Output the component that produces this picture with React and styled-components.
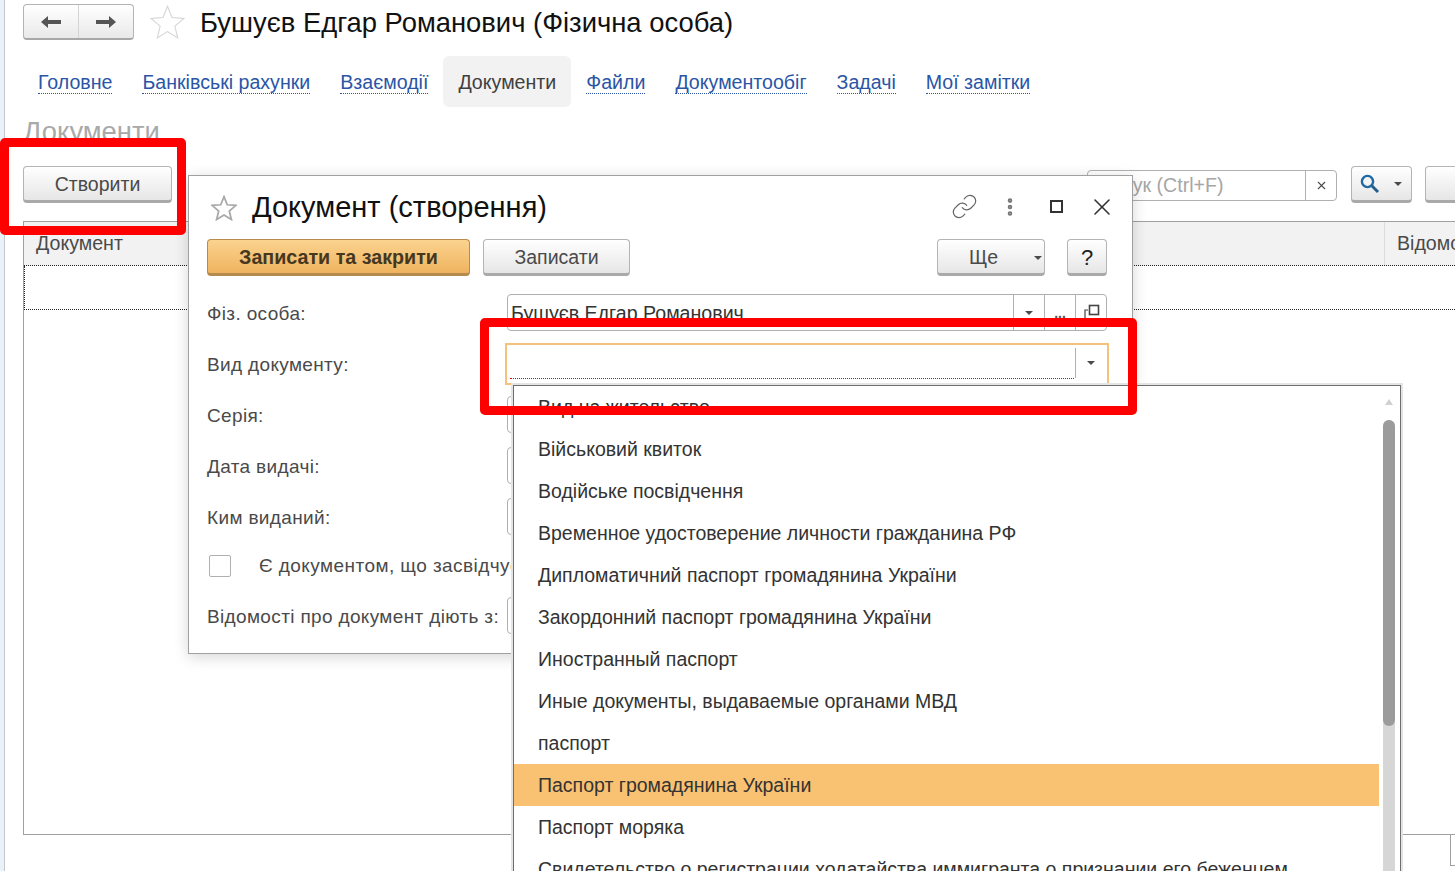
import React from 'react';
import styled, { createGlobalStyle } from 'styled-components';
import { Link, EllipsisVertical, X } from 'lucide-react';

const GlobalStyle = createGlobalStyle`
  html, body {
    margin: 0;
    padding: 0;
    background: #fff;
    overflow: hidden;
  }
  * {
    box-sizing: border-box;
  }
  body {
    font-family: "Liberation Sans", Arial, sans-serif;
  }
`;

const Page = styled.div`
  position: relative;
  display: flex;
  width: 1455px;
  height: 871px;
  overflow: hidden;
  background: #fff;
`;

const SideStrip = styled.div`
  flex: none;
  width: 5px;
  background: #eaf1f8;
  border-right: 1px solid #c4c9ce;
`;

const Content = styled.div`
  flex: none;
  width: 1600px;
  padding: 4px 0 0 18px;
`;

const TopBar = styled.div`
  display: flex;
  align-items: center;
  height: 36px;
`;

const NavGroup = styled.div`
  display: flex;
  width: 111px;
  height: 36px;
  border: 1px solid #b4b4b4;
  border-bottom: 2px solid #a8a8a8;
  border-radius: 4px;
  background: linear-gradient(#ffffff, #e9e9e9);
`;

const NavButton = styled.div`
  flex: 1;
  display: flex;
  align-items: center;
  justify-content: center;
  & + & {
    border-left: 1px solid #d4d4d4;
  }
`;

const ArrowIcon = styled.svg`
  width: 22px;
  height: 14px;
  transform: ${(p) => (p.$flip ? 'scaleX(-1)' : 'none')};
`;

const TitleStar = styled.svg`
  flex: none;
  margin-left: 15px;
  width: 37px;
  height: 36px;
`;

const PageTitle = styled.h1`
  margin: 2px 0 0 14px;
  font-size: 27.4px;
  font-weight: 400;
  color: #111;
  white-space: nowrap;
`;

const Tabs = styled.div`
  display: flex;
  margin-top: 16px;
  height: 51px;
`;

const Tab = styled.div`
  display: flex;
  align-items: center;
  padding: 2px 15px 0;
  font-size: 19.6px;
  border-radius: 6px;
  color: #404040;
  background: ${(p) => (p.$active ? '#f2f2f2' : 'transparent')};
`;

const TabLink = styled.span`
  color: #2a55a6;
  border-bottom: 1px dotted #2a55a6;
  line-height: 22px;
`;

const SectionTitle = styled.div`
  margin-top: 9px;
  height: 31px;
  line-height: 31px;
  font-size: 27.4px;
  color: #a9a9a9;
`;

const Toolbar = styled.div`
  display: flex;
  align-items: center;
  margin-top: 19px;
  height: 37px;
`;

const Button = styled.div`
  flex: none;
  display: flex;
  align-items: center;
  justify-content: center;
  gap: ${(p) => p.$gap || 0}px;
  width: ${(p) => p.$width}px;
  height: 37px;
  padding-top: 2px;
  font-size: ${(p) => (p.$primary ? 19.7 : 19.5)}px;
  font-weight: ${(p) => (p.$primary ? 700 : 400)};
  color: ${(p) => (p.$primary ? '#46371f' : '#4a4a4a')};
  border: 1px solid ${(p) => (p.$primary ? '#b98c4a' : '#b4b4b4')};
  border-bottom: 3px solid ${(p) => (p.$primary ? '#b58a4e' : '#a9a9a9')};
  border-radius: 4px;
  background: ${(p) => (p.$primary
    ? 'linear-gradient(#fbd38f, #efb35f)'
    : 'linear-gradient(#ffffff, #e6e6e6)')};
`;

const SearchButton = styled(Button)`
  margin-left: 14px;
  padding: 0 2px 0 0;
`;

const NextButton = styled(Button)`
  margin-left: 13px;
`;

const MoreButton = styled(Button)`
  justify-content: flex-start;
  padding-left: 31px;
`;

const HelpButton = styled(Button)`
  margin-left: 9px;
  font-size: 22px;
  color: #222;
`;

const Caret = styled.span`
  flex: none;
  width: 0;
  height: 0;
  border-left: 4px solid transparent;
  border-right: 4px solid transparent;
  border-top: 4px solid #4a4a4a;
`;

const SearchBox = styled.div`
  flex: none;
  display: flex;
  margin: 1px 0 0 915px;
  width: 250px;
  height: 31px;
  border: 1px solid #b0b0b0;
  border-radius: 4px;
`;

const SearchInput = styled.div`
  flex: 1;
  padding-left: 4px;
  line-height: 29px;
  font-size: 19.6px;
  color: #a6a6a6;
`;

const SearchClear = styled.div`
  flex: none;
  display: flex;
  align-items: center;
  justify-content: center;
  width: 31px;
  border-left: 1px solid #b0b0b0;
  color: #4a4a4a;
`;

const SearchIcon = styled.svg`
  width: 20px;
  height: 20px;
`;

const Table = styled.div`
  margin-top: 18px;
  height: 614px;
  border: 1px solid #a0a0a0;
  border-width: 1px 0 1px 1px;
`;

const TableHead = styled.div`
  display: flex;
  height: 44px;
  background: #f2f2f2;
  border-bottom: 1px dotted #222;
`;

const HeadCell = styled.div`
  display: flex;
  align-items: center;
  padding-left: 12px;
  font-size: 19.6px;
  color: #4a4a4a;
  width: ${(p) => p.$width}px;
  & + & {
    border-left: 1px solid #dcdcdc;
  }
`;

const TableRow = styled.div`
  height: 44px;
  border-bottom: 1px dotted #222;
  border-left: 1px dotted #222;
`;

const Pager = styled.div`
  margin-left: 1427px;
  height: 31px;
  border-left: 1px solid #a0a0a0;
  border-bottom: 1px solid #a0a0a0;
`;

const Dialog = styled.div`
  position: absolute;
  left: 188px;
  top: 175px;
  width: 945px;
  height: 479px;
  padding: 0 25px 0 18px;
  background: #fff;
  border: 1px solid #a0a0a0;
  box-shadow: 0 3px 14px rgba(0, 0, 0, 0.16);
`;

const DialogHeader = styled.div`
  display: flex;
  align-items: center;
  height: 63px;
`;

const DialogStar = styled.svg`
  flex: none;
  margin-left: 4px;
  width: 26px;
  height: 26px;
`;

const DialogTitle = styled.h2`
  margin: 0 0 0 15px;
  flex: 1;
  font-size: 29px;
  font-weight: 400;
  color: #111;
`;

const HeaderIcons = styled.div`
  display: flex;
  align-items: center;
  margin: 0 -18px 2px 0;
  color: #555;
`;

const HeaderIcon = styled.div`
  display: flex;
  align-items: center;
  justify-content: center;
  width: 46px;
  height: 30px;
`;

const MaximizeBox = styled.span`
  width: 13px;
  height: 13px;
  border: 2px solid #333;
`;

const ActionRow = styled.div`
  display: flex;
  align-items: center;
  gap: 13px;
`;

const ActionSpacer = styled.div`
  flex: 1;
`;

const Form = styled.div`
  display: flex;
  flex-direction: column;
  gap: 14px;
  margin-top: 18px;
`;

const FormRow = styled.div`
  display: flex;
  align-items: center;
  height: 37px;
`;

const FieldLabel = styled.div`
  flex: none;
  width: 300px;
  padding-top: 2px;
  font-size: 19px;
  letter-spacing: 0.35px;
  color: #4a4a4a;
  white-space: nowrap;
`;

const Field = styled.div`
  flex: none;
  display: flex;
  width: 600px;
  height: 37px;
  border: 1px solid #b0b0b0;
  border-radius: 4px;
`;

const FocusedField = styled.div`
  flex: none;
  display: flex;
  width: 604px;
  height: 42px;
  margin-left: -2px;
  border: 2px solid #f4c27a;
`;

const FieldValue = styled.div`
  flex: 1;
  padding-left: 3px;
  line-height: 37px;
  font-size: 19.6px;
  color: #333;
  white-space: nowrap;
`;

const RequiredValue = styled.div`
  flex: 1;
  margin: 0 1px 4px 3px;
  border-bottom: 1px dotted #e00000;
`;

const FieldButton = styled.div`
  flex: none;
  display: flex;
  align-items: center;
  justify-content: center;
  width: 31px;
  border-left: 1px solid #b0b0b0;
  color: #555;
`;

const FocusedButton = styled(FieldButton)`
  width: 32px;
  margin: 3px 0 5px;
  padding-right: 2px;
`;

const Dots = styled.span`
  font-size: 14px;
  font-weight: 700;
  color: #555;
`;

const OpenIcon = styled.svg`
  width: 17px;
  height: 17px;
`;

const CheckRow = styled(FormRow)`
  height: 34px;
  padding-left: 2px;
`;

const Checkbox = styled.span`
  flex: none;
  width: 22px;
  height: 22px;
  border: 1px solid #b0b0b0;
  border-radius: 2px;
`;

const CheckLabel = styled.div`
  margin-left: 28px;
  font-size: 19px;
  letter-spacing: 0.44px;
  color: #4a4a4a;
  white-space: nowrap;
`;

const DropList = styled.div`
  position: absolute;
  left: 513px;
  top: 385px;
  width: 888px;
  height: 520px;
  display: flex;
  background: #fff;
  border: 1px solid #6e6e6e;
  box-shadow: 0 0 0 2px #e4e4e4;
`;

const Options = styled.div`
  flex: 1;
`;

const Option = styled.div`
  height: 42px;
  padding-left: 24px;
  line-height: 42px;
  font-size: 19.5px;
  color: #333;
  white-space: nowrap;
  background: ${(p) => (p.$selected ? '#f9c272' : 'transparent')};
`;

const ScrollColumn = styled.div`
  flex: none;
  width: 21px;
  padding: 0 5px 0 4px;
  display: flex;
  flex-direction: column;
`;

const ScrollUp = styled.span`
  flex: none;
  align-self: center;
  margin-top: 13px;
  width: 0;
  height: 0;
  border-left: 4px solid transparent;
  border-right: 4px solid transparent;
  border-bottom: 6px solid #d0d0d0;
`;

const ScrollTrack = styled.div`
  flex: 1;
  margin-top: 15px;
  border-radius: 6px;
  background: #d6d6d6;
`;

const ScrollThumb = styled.div`
  height: 306px;
  border-radius: 6px;
  background: #9b9b9b;
`;

const Highlight = styled.div`
  position: absolute;
  left: ${(p) => p.$left}px;
  top: ${(p) => p.$top}px;
  width: ${(p) => p.$width}px;
  height: ${(p) => p.$height}px;
  border: 9px solid #ff0000;
  border-radius: 5px;
`;

const documentKinds = [
  'Вид на жительство',
  'Військовий квиток',
  'Водійське посвідчення',
  'Временное удостоверение личности гражданина РФ',
  'Дипломатичний паспорт громадянина України',
  'Закордонний паспорт громадянина України',
  'Иностранный паспорт',
  'Иные документы, выдаваемые органами МВД',
  'паспорт',
  'Паспорт громадянина України',
  'Паспорт моряка',
  'Свидетельство о регистрации ходатайства иммигранта о признании его беженцем',
];

const tabs = ['Головне', 'Банківські рахунки', 'Взаємодії', 'Документи', 'Файли', 'Документообіг', 'Задачі', 'Мої замітки'];

const starPath = 'M12 1.5 L15 9 L23 9.6 L16.9 14.8 L18.8 22.6 L12 18.4 L5.2 22.6 L7.1 14.8 L1 9.6 L9 9 Z';

const Arrow = ({ flip }) => (
  <ArrowIcon viewBox="0 0 22 14" $flip={flip}>
    <path d="M8 1 L1 7 L8 13 L8 9 L21 9 L21 5 L8 5 Z" fill="#555" />
  </ArrowIcon>
);

const App = () => (
  <Page>
    <GlobalStyle />
    <SideStrip />
    <Content>
      <TopBar>
        <NavGroup>
          <NavButton><Arrow /></NavButton>
          <NavButton><Arrow flip /></NavButton>
        </NavGroup>
        <TitleStar viewBox="0 0 24 24">
          <path d={starPath} fill="#fff" stroke="#d4d4d4" strokeWidth="0.7" />
        </TitleStar>
        <PageTitle>Бушуєв Едгар Романович (Фізична особа)</PageTitle>
      </TopBar>
      <Tabs>
        {tabs.map((name) => (
          name === 'Документи'
            ? <Tab key={name} $active>{name}</Tab>
            : <Tab key={name}><TabLink>{name}</TabLink></Tab>
        ))}
      </Tabs>
      <SectionTitle>Документи</SectionTitle>
      <Toolbar>
        <Button $width={149}>Створити</Button>
        <SearchBox>
          <SearchInput>Пошук (Ctrl+F)</SearchInput>
          <SearchClear><X size={13} strokeWidth={2} /></SearchClear>
        </SearchBox>
        <SearchButton $width={61} $gap={14}>
          <SearchIcon viewBox="0 0 20 20">
            <circle cx="7.5" cy="7.5" r="5.6" fill="none" stroke="#1f6aa5" strokeWidth="2.4" />
            <path d="M11.8 11.8 L18 18" stroke="#245f8c" strokeWidth="3" />
          </SearchIcon>
          <Caret />
        </SearchButton>
        <NextButton $width={60} />
      </Toolbar>
      <Table>
        <TableHead>
          <HeadCell $width={1360}>Документ</HeadCell>
          <HeadCell $width={200}>Відомості</HeadCell>
        </TableHead>
        <TableRow />
      </Table>
      <Pager />
    </Content>

    <Dialog>
      <DialogHeader>
        <DialogStar viewBox="0 0 24 24">
          <path d={starPath} fill="#fff" stroke="#a8a8a8" strokeWidth="1.6" />
        </DialogStar>
        <DialogTitle>Документ (створення)</DialogTitle>
        <HeaderIcons>
          <HeaderIcon><Link size={27} strokeWidth={1.1} color="#666" /></HeaderIcon>
          <HeaderIcon><EllipsisVertical size={22} strokeWidth={3} color="#777" /></HeaderIcon>
          <HeaderIcon><MaximizeBox /></HeaderIcon>
          <HeaderIcon><X size={28} strokeWidth={1.3} color="#333" /></HeaderIcon>
        </HeaderIcons>
      </DialogHeader>
      <ActionRow>
        <Button $primary $width={263}>Записати та закрити</Button>
        <Button $width={147}>Записати</Button>
        <ActionSpacer />
        <MoreButton $width={108} $gap={36}><span>Ще</span><Caret /></MoreButton>
        <HelpButton $width={40}>?</HelpButton>
      </ActionRow>
      <Form>
        <FormRow>
          <FieldLabel>Фіз. особа:</FieldLabel>
          <Field>
            <FieldValue>Бушуєв Едгар Романович</FieldValue>
            <FieldButton><Caret /></FieldButton>
            <FieldButton><Dots>...</Dots></FieldButton>
            <FieldButton>
              <OpenIcon viewBox="0 0 17 17">
                <rect x="6.5" y="1.5" width="9" height="9" fill="none" stroke="#444" strokeWidth="1.6" />
                <path d="M2 14 L2 6 L5 6" fill="none" stroke="#444" strokeWidth="1.2" />
              </OpenIcon>
            </FieldButton>
          </Field>
        </FormRow>
        <FormRow>
          <FieldLabel>Вид документу:</FieldLabel>
          <FocusedField>
            <RequiredValue />
            <FocusedButton><Caret /></FocusedButton>
          </FocusedField>
        </FormRow>
        <FormRow>
          <FieldLabel>Серія:</FieldLabel>
          <Field />
        </FormRow>
        <FormRow>
          <FieldLabel>Дата видачі:</FieldLabel>
          <Field />
        </FormRow>
        <FormRow>
          <FieldLabel>Ким виданий:</FieldLabel>
          <Field />
        </FormRow>
        <CheckRow>
          <Checkbox />
          <CheckLabel>Є документом, що засвідчує особу</CheckLabel>
        </CheckRow>
        <FormRow>
          <FieldLabel>Відомості про документ діють з:</FieldLabel>
          <Field />
        </FormRow>
      </Form>
    </Dialog>

    <DropList>
      <Options>
        {documentKinds.map((kind) => (
          <Option key={kind} $selected={kind === 'Паспорт громадянина України'}>{kind}</Option>
        ))}
      </Options>
      <ScrollColumn>
        <ScrollUp />
        <ScrollTrack><ScrollThumb /></ScrollTrack>
      </ScrollColumn>
    </DropList>

    <Highlight $left={0} $top={138} $width={186} $height={97} />
    <Highlight $left={480} $top={318} $width={657} $height={97} />
  </Page>
);

export default App;
